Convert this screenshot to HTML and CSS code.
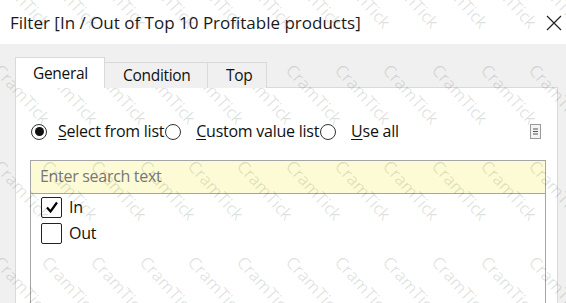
FILE: index.html
```html
<!DOCTYPE html>
<html lang="en">
<head>
    <meta charset="UTF-8">
    <title>Filter</title>
    <link rel="stylesheet" href="styles.css">
</head>
<body>
    <div class="window">
        <!-- Title bar -->
        <header class="titlebar">
            <span class="title">Filter [In / Out of Top 10 Profitable products]</span>
            <svg class="close" width="16" height="16" viewBox="0 0 16 16">
                <path d="M1 1 L15 15 M15 1 L1 15" stroke="#222" stroke-width="1.2" fill="none"/>
            </svg>
        </header>

        <div class="dialog">
            <!-- Tabs -->
            <div class="tabs">
                <div class="tab active">General</div>
                <div class="tab">Condition</div>
                <div class="tab">Top</div>
            </div>

            <div class="panel">
                <div class="mode-row">
                    <label class="radio checked"><span class="dot"></span><span><u>S</u>elect from list</span></label>
                    <label class="radio"><span class="dot"></span><span><u>C</u>ustom value list</span></label>
                    <label class="radio"><span class="dot"></span><span><u>U</u>se all</span></label>
                    <span class="menu-icon">
                        <svg width="11" height="15" viewBox="0 0 11 15">
                            <rect x="0.5" y="0.5" width="10" height="14" fill="#f4f4f4" stroke="#9a9a9a"/>
                            <path d="M3 5 H8 M3 7.5 H8 M3 10 H8" stroke="#555" stroke-width="1"/>
                        </svg>
                    </span>
                </div>

                <div class="value-list">
                    <div class="search">Enter search text</div>
                    <div class="item">
                        <span class="check">
                            <svg width="14" height="14" viewBox="0 0 14 14">
                                <path d="M2 7.5 L5.5 11.5 L12 2.5" stroke="#000" stroke-width="2.2" fill="none"/>
                            </svg>
                        </span>
                        <span>In</span>
                    </div>
                    <div class="item">
                        <span class="check"></span>
                        <span>Out</span>
                    </div>
                </div>
            </div>
        </div>

        <!-- watermark layer over the screenshot -->
        <div class="watermark" id="watermark"></div>
    </div>

    <script>
        // Fill the watermark layer with repeated labels
        const layer = document.getElementById('watermark');
        for (let i = 0; i < 4 * 13; i++) {
            const mark = document.createElement('span');
            mark.textContent = 'CramTick';
            layer.appendChild(mark);
        }
    </script>
</body>
</html>
```

FILE: styles.css
```css
/* Global styles */
body {
    margin: 0;
    padding: 0;
    font-family: 'Open Sans', 'Noto Sans', sans-serif;
    color: #111;
    background: #f0f0f0;
}

.window {
    width: 566px;
    height: 303px;
    overflow: hidden;
    display: flex;
    flex-direction: column;
    position: relative;
}

/* Title bar */
.titlebar {
    height: 44px;
    flex: none;
    background: #fff;
    display: flex;
    align-items: center;
    justify-content: space-between;
    padding: 0 4px 0 10px;
}

.title {
    font-size: 17px;
    color: #1a1a1a;
}

.close {
    margin-top: 1px;
}

/* Dialog body */
.dialog {
    flex: 1;
    background: #f0f0f0;
    padding: 14px 8px 0 15px;
    display: flex;
    flex-direction: column;
}

.tabs {
    display: flex;
    align-items: flex-end;
    height: 30px;
    margin-bottom: -1px;
    position: relative;
    z-index: 1;
}

.tab {
    height: 26px;
    box-sizing: border-box;
    border: 1px solid #d9d9d9;
    border-bottom: none;
    border-left: none;
    background: #f0f0f0;
    font-size: 15.5px;
    letter-spacing: -0.3px;
    line-height: 24px;
    padding: 0 18px;
}

.tab.active {
    height: 31px;
    width: 90px;
    border-left: 1px solid #d9d9d9;
    background: #fff;
    padding: 3px 0 0 17px;
}

.tab:nth-child(2) {
    width: 103px;
}

.tab:nth-child(3) {
    width: 59px;
    padding-left: 18px;
}

.panel {
    flex: 1;
    background: #fff;
    border: 1px solid #d9d9d9;
    padding: 0 0 0 14px;
}

/* Radio options */
.mode-row {
    display: flex;
    align-items: center;
    height: 34px;
    margin-top: 26px;
    font-size: 16px;
    letter-spacing: -0.25px;
    padding-right: 16px;
}

.radio {
    display: flex;
    align-items: center;
}

.radio .dot {
    flex: none;
    width: 16px;
    height: 16px;
    box-sizing: border-box;
    border: 1.3px solid #333;
    border-radius: 50%;
    margin: 1px 15px 0 1px;
    display: flex;
    align-items: center;
    justify-content: center;
}

.radio.checked .dot {
    margin: 1px 11px 0 1px;
}

.radio.checked .dot::after {
    content: '';
    width: 9px;
    height: 9px;
    border-radius: 50%;
    background: #111;
}

.radio u {
    text-decoration-thickness: 1px;
    text-underline-offset: 2px;
}

.menu-icon {
    margin-left: auto;
    display: flex;
}

/* Value list */
.value-list {
    margin-top: 12px;
    width: 516px;
    height: 200px;
    box-sizing: border-box;
    border: 1px solid #a5a5a5;
}

.search {
    height: 33px;
    box-sizing: border-box;
    background: #fdfbd5;
    border-bottom: 1px solid #a5a5a5;
    color: #777;
    font-size: 16px;
    letter-spacing: -0.3px;
    line-height: 31px;
    padding-left: 9px;
}

.item {
    display: flex;
    align-items: center;
    height: 26px;
    padding-left: 10px;
    font-size: 16px;
    letter-spacing: -0.3px;
}

.item:first-of-type {
    margin-top: 1px;
}

.check {
    flex: none;
    width: 21px;
    height: 21px;
    box-sizing: border-box;
    border: 1px solid #222;
    border-radius: 2px;
    margin-right: 7px;
    display: flex;
    align-items: center;
    justify-content: center;
}

/* Watermark overlay */
.watermark {
    position: absolute;
    top: -35px;
    left: -45px;
    display: grid;
    grid-template-columns: repeat(13, 48.7px);
    grid-auto-rows: 96px;
    pointer-events: none;
}

.watermark span {
    font-size: 17px;
    line-height: 17px;
    color: rgba(0, 0, 0, 0.12);
    transform: rotate(48deg);
    transform-origin: left top;
    white-space: nowrap;
}
```
